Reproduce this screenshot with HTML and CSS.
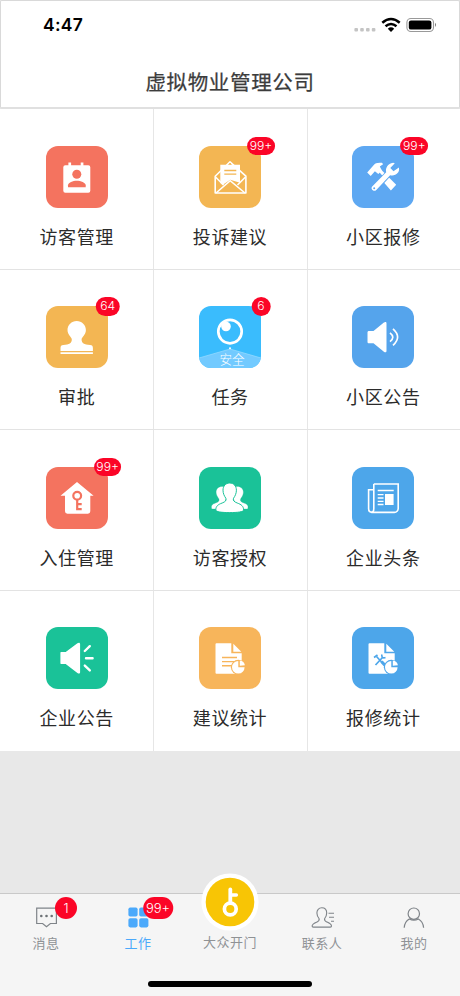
FILE: index.html
```html
<!DOCTYPE html>
<html lang="zh-CN">
<head>
<meta charset="utf-8">
<title>虚拟物业管理公司</title>
<link rel="stylesheet" href="styles.css">
</head>
<body>
<div class="screen">
  <header class="header">
    <div class="status">
      <span class="time">4:47</span>
      <svg class="status-icons" width="84" height="20" viewBox="0 0 84 20">
        <g fill="#c4c4c4"><rect x="1.4" y="13" width="3.6" height="3.4" rx="1"/><rect x="7.2" y="13" width="3.6" height="3.4" rx="1"/><rect x="13" y="13" width="3.6" height="3.4" rx="1"/><rect x="18.8" y="13" width="3.6" height="3.4" rx="1"/></g>
        <g fill="none" stroke="#000" stroke-width="2.5"><path d="M29.3 7.8Q38 .3 46.7 7.8"/><path d="M32.5 11.3Q38 6.6 43.5 11.3"/></g>
        <path d="M34.8 13.7Q38 11 41.2 13.7L38 17Z"/>
        <rect x="53.9" y="3.5" width="26.6" height="13" rx="4" fill="none" stroke="#999" stroke-width="1.1"/>
        <rect x="55.8" y="5.4" width="22.6" height="9.2" rx="2.2"/>
        <path d="M82 7.8Q84 9.8 82 12Z" fill="#777"/>
      </svg>
    </div>
    <h1 class="title">虚拟物业管理公司</h1>
  </header>

  <main class="grid">
    <a class="cell">
      <div class="tile coral">
        <svg viewBox="0 0 62 62"><path fill="#fff" d="M22.4 16.5h2.7v2.8h9.6v-2.8h2.7v2.8h4.9a2 2 0 0 1 2 2v23.4a2 2 0 0 1-2 2H19.3a2 2 0 0 1-2-2V21.3a2 2 0 0 1 2-2h3.1z"/><g fill="#f4735f"><circle cx="30.8" cy="28.2" r="4.5"/><path d="M22 41.2v-2c0-2.4 5-4.5 8.8-4.5s8.9 2.1 8.9 4.5v2z"/></g></svg>
      </div>
      <span class="label">访客管理</span>
    </a>
    <a class="cell">
      <div class="tile amber">
        <svg viewBox="0 0 62 62"><path d="M16.2 30.2 31 15.8 46.9 30.2V47H16.2z" fill="none" stroke="#fff" stroke-width="1.6" stroke-linejoin="round"/><path d="M21.3 18.7H41v18L31.2 33.8 23.5 39l-2.2-2z" fill="#fff"/><path d="m16.5 31 8 8M46.5 31l-8 8M17 47l14.2-12.3L46 47" fill="none" stroke="#fff" stroke-width="1.6"/><path d="M25.3 24.5h12M25.3 28.2h12" stroke="#f3b653" stroke-width="1.3"/><circle cx="31.2" cy="17.8" r=".8" fill="#f3b653"/></svg>
        <span class="badge">99+</span>
      </div>
      <span class="label">投诉建议</span>
    </a>
    <a class="cell">
      <div class="tile blue">
        <svg viewBox="0 0 62 62"><g fill="#fff"><path d="m15.2 26.5 6.6-7.6c1.4-1.7 3.5-2.5 8.2-2.1l1.1 1.4-3.3 2.2 2.1 4-3.6 3.7-3.4-2.9-4.2 4.8z"/><path d="m26.3 25 2.2-2.1 15.7 15.8-5.3 5.9-7-8.1 2.3-2.6z"/></g><path d="m24 41 12-13" stroke="#5ea8f2" stroke-width="6.8"/><path fill="#fff" d="m20.2 40.5 14-14.2c-1-4.2 1.4-8.6 6.9-9.5l1.7.5-4.5 4.8 3.2 3.2 5.4-3.7c1.4 5.1-3.7 9-8.8 7.6L24.3 43.9c-2.5 2.5-6.2-.9-4.1-3.4z"/><circle cx="22.2" cy="42.3" r="1" fill="#5ea8f2"/></svg>
        <span class="badge">99+</span>
      </div>
      <span class="label">小区报修</span>
    </a>
    <a class="cell">
      <div class="tile amber">
        <svg viewBox="0 0 62 62"><path fill="#fff" d="M30.7 15c5.2 0 9.2 4 9.2 9 0 5.2-4.3 6.8-4.3 9.6 0 3.6 2.3 5.2 8.5 5.3 2 0 2.8 1 2.8 3v3.1H14.5v-3.1c0-2 .8-3 2.8-3 6.2-.1 8.5-1.7 8.5-5.3 0-2.8-4.3-4.4-4.3-9.6 0-5 4-9 9.2-9zM14.5 46.2h32.4V48H14.5z"/></svg>
        <span class="badge two">64</span>
      </div>
      <span class="label">审批</span>
    </a>
    <a class="cell">
      <div class="tile sky">
        <svg viewBox="0 0 62 62"><path d="M0 52 31 43l31 9v10H0z" fill="#72caff"/><path d="m0 52 31-9 31 9" fill="none" stroke="#9bdcff" stroke-width=".7"/><circle cx="31" cy="25.6" r="11.7" fill="none" stroke="#fff" stroke-width="2.7"/><circle cx="27" cy="20.5" r="4.8" fill="#fff"/><circle cx="31" cy="42.3" r="1" fill="#fff"/><text class="tile-text" x="33" y="58.3" text-anchor="middle">安全</text></svg>
        <span class="badge">6</span>
      </div>
      <span class="label">任务</span>
    </a>
    <a class="cell">
      <div class="tile blue2">
        <svg viewBox="0 0 62 62"><path fill="#fff" d="M17 25h4.5l10.4-8.4c1.5-1.1 2.6-.6 2.6.8v27.5c0 1.4-1.1 1.9-2.6.8l-10.4-8.4H17c-1 0-1.5-.5-1.5-1.5v-9.3c0-1 .5-1.5 1.5-1.5z"/><path d="M38 26.8Q43.6 31.2 38 35.6M41 22.8Q50.2 31.1 41 39.4" fill="none" stroke="#fff" stroke-width="1.7"/></svg>
      </div>
      <span class="label">小区公告</span>
    </a>
    <a class="cell">
      <div class="tile coral">
        <svg viewBox="0 0 62 62"><path fill="#fff" d="m31 15 16.6 13.8h-3.3v15.5a2.4 2.4 0 0 1-2.4 2.4H21.4a2.4 2.4 0 0 1-2.4-2.4V28.8h-4.5z"/><g fill="none" stroke="#f4735f" stroke-width="2.2"><circle cx="31.2" cy="28.7" r="3.9"/><path d="M31.2 32.6V43.2M31.2 37.2h4.5M31.2 42.2h4.5"/></g></svg>
        <span class="badge">99+</span>
      </div>
      <span class="label">入住管理</span>
    </a>
    <a class="cell">
      <div class="tile green">
        <svg viewBox="0 0 62 62"><g fill="#fff" stroke="#1ac298"><path stroke-width=".3" d="M23.2 19.4c3.4 0 5.8 2.5 5.8 6.2 0 3.2-1.7 5.2-2.4 7.5V42H12.8c-1.2-3.8.8-4.9 3.7-6 3.2-1.2 4.1-2.5 3.4-4.1-1.5-2.2-2.8-4.4-2.8-6.7 0-3.5 2.5-5.8 6.1-5.8z"/><path stroke-width=".3" transform="matrix(-1 0 0 1 61.5 0)" d="M23.2 19.4c3.4 0 5.8 2.5 5.8 6.2 0 3.2-1.7 5.2-2.4 7.5V42H12.8c-1.2-3.8.8-4.9 3.7-6 3.2-1.2 4.1-2.5 3.4-4.1-1.5-2.2-2.8-4.4-2.8-6.7 0-3.5 2.5-5.8 6.1-5.8z"/><path stroke-width="1" d="M30.7 16c4 0 6.7 3 6.7 7.2 0 3.3-1.4 6-2.9 8.1-.7 2.2.6 3.5 3.7 4.7 4.4 1.6 6.4 3.3 6.4 7.1 0 1.7-5.9 2.5-13.9 2.5s-13.9-.8-13.9-2.5c0-3.8 2-5.5 6.4-7.1 3.1-1.2 4.4-2.5 3.7-4.7-1.5-2.1-2.9-4.8-2.9-8.1 0-4.2 2.7-7.2 6.7-7.2z"/></g></svg>
      </div>
      <span class="label">访客授权</span>
    </a>
    <a class="cell">
      <div class="tile azure">
        <svg viewBox="0 0 62 62"><g fill="none" stroke="#fff" stroke-width="1.6"><path d="M21.8 17h24.4v24.6a3.8 3.8 0 0 1-3.8 3.8H20c-2 0-3.4-1.7-3.4-3.8V22.8h5.2"/><path d="M21.8 17v24.6c0 2.2-1 3.8-2.4 3.8"/><path d="M25.7 23.5h16"/><path stroke-width="1.3" d="M25.7 27.7h5.8M25.7 31h5.8M25.7 34.3h5.8M25.7 37.5h5.8"/></g><path fill="#fff" d="M33 27h8.6v11H33z"/></svg>
      </div>
      <span class="label">企业头条</span>
    </a>
    <a class="cell">
      <div class="tile green">
        <svg viewBox="0 0 62 62"><path fill="#fff" d="M15.4 25h4.3L31.4 16.2c1.6-1.1 2.7-.5 2.7.8v28.2c0 1.3-1.1 1.9-2.7.8L19.7 36.9h-4.3c-.7 0-1-.4-1-1V26c0-.7.3-1 1-1z"/><path d="m38.8 24 5-4.8M40 31.3h6.6M38.8 38.6l5 4.8" stroke="#fff" stroke-width="2.4" stroke-linecap="round"/></svg>
      </div>
      <span class="label">企业公告</span>
    </a>
    <a class="cell">
      <div class="tile orange">
        <svg viewBox="0 0 62 62"><path fill="#fff" d="M17.5 16.3h14.8v10h10.4v20.4H17.5a1 1 0 0 1-1-1V17.3a1 1 0 0 1 1-1zM34.3 16.8l8 8h-8z"/><path d="M23 30.5h15M23 34.6h12M23 38.7h10" stroke="#f7b55b" stroke-width="1.4"/><circle cx="39.3" cy="40.2" r="7.4" fill="#f7b55b"/><path fill="#fff" d="M39.3 40.2v-6.3a6.3 6.3 0 1 0 6.3 6.3zM40.8 33.4c3 .3 4.7 2 5.1 4.9l-5.1.4z"/></svg>
      </div>
      <span class="label">建议统计</span>
    </a>
    <a class="cell">
      <div class="tile azure">
        <svg viewBox="0 0 62 62"><path fill="#fff" d="M17.5 16.3h14.8v10h10.4v20.4H17.5a1 1 0 0 1-1-1V17.3a1 1 0 0 1 1-1zM34.3 16.8l8 8h-8z"/><g fill="none" stroke="#4da6ea" stroke-width="1.7"><path d="m23.5 38 7-7.5M24.5 29.5l6 6.5"/><path d="m22 30.5 3.5-2.5M30 27.5c-1 2.5 1 4 3.5 3"/><path stroke-width="3" d="m29.5 34.5 4.5 5"/></g><circle cx="39.3" cy="40.2" r="7.4" fill="#4da6ea"/><path fill="#fff" d="M39.3 40.2v-6.3a6.3 6.3 0 1 0 6.3 6.3zM40.8 33.4c3 .3 4.7 2 5.1 4.9l-5.1.4z"/></svg>
      </div>
      <span class="label">报修统计</span>
    </a>
  </main>

  <nav class="tabs">
    <a class="tab">
      <div class="tab-icon"><svg viewBox="0 0 30 24"><path d="M5.7 2.2h19.7v15.3h-6L15.5 20.8l-3.9-3.3H5.7z" fill="none" stroke="#7f8489" stroke-width="1.2"/><g fill="#6d7276"><circle cx="10.3" cy="10" r="1.3"/><circle cx="15.5" cy="10" r="1.3"/><circle cx="20.7" cy="10" r="1.3"/></g></svg><span class="badge tab-badge">1</span></div>
      <span class="tab-label">消息</span>
    </a>
    <a class="tab active">
      <div class="tab-icon"><svg viewBox="0 0 30 24"><g fill="#4ba9fb"><rect x="5.4" y="1.4" width="9.2" height="9.2" rx="1.8"/><rect x="16.2" y="1.4" width="9.2" height="9.2" rx="1.8"/><rect x="5.4" y="12.2" width="9.2" height="9.2" rx="1.8"/><rect x="16.2" y="12.2" width="9.2" height="9.2" rx="1.8"/></g></svg><span class="badge tab-badge wide">99+</span></div>
      <span class="tab-label">工作</span>
    </a>
    <a class="tab tab-door">
      <div class="door"><svg viewBox="0 0 58 58"><circle cx="29" cy="29" r="28.6" fill="#fff"/><circle cx="29" cy="29" r="24.3" fill="#f8c505"/><g fill="none" stroke="#fff"><circle cx="29.3" cy="36" r="5.9" stroke-width="3.7"/><path d="M29.3 30V16.5" stroke-width="3.8" stroke-linecap="round"/><path d="M31 22h4.4" stroke-width="3.4" stroke-linecap="round"/></g></svg></div>
      <span class="tab-label">大众开门</span>
    </a>
    <a class="tab">
      <div class="tab-icon"><svg viewBox="0 0 30 24"><g fill="none" stroke="#7f8489" stroke-width="1.1"><path d="M14.8 1.8c3.1 0 4.9 2.3 4.9 5.3 0 2.5-1 4.1-2 5.4-.7 1.7 0 2.5 2 3.4 3.2 1.4 4.8 2 4.8 4.2 0 .7-.5 1-1.2 1h-17c-.8 0-1.2-.3-1.2-1 0-2.2 1.8-2.9 5-4.2 2-.9 2.6-1.7 1.9-3.4-1-1.3-2.1-2.9-2.1-5.4 0-3 1.8-5.3 4.9-5.3z"/><path d="M21.5 7.2H27M22 11.2h5M24 15.2h3"/></g></svg></div>
      <span class="tab-label">联系人</span>
    </a>
    <a class="tab">
      <div class="tab-icon"><svg viewBox="0 0 30 24"><g fill="none" stroke="#7f8489" stroke-width="1.2"><circle cx="14.8" cy="7.7" r="5.7"/><path d="M5.2 21.8c.3-4.4 2.2-7.2 5.1-8.8 2.7 1.5 6.4 1.5 9.1 0 2.9 1.6 4.9 4.4 5.2 8.8"/></g></svg></div>
      <span class="tab-label">我的</span>
    </a>
    <div class="home"></div>
  </nav>
</div>
</body>
</html>
```
FILE: styles.css
```css
* { box-sizing: border-box; }
body { margin: 0; background: #e8e8e8; font-family: "Noto Sans CJK SC", sans-serif; }
.screen { width: 460px; height: 996px; display: flex; flex-direction: column; overflow: hidden; }

.header { height: 109px; flex: none; background: #fff; border: 1px solid #d9d9d9; border-bottom-width: 2px; border-bottom-color: #e0e0e0; border-radius: 2px; }
.status { height: 47px; padding: 0 22px 0 42px; display: flex; justify-content: space-between; align-items: center; }
.time { font: 600 17.5px/20px Inter, sans-serif; color: #000; letter-spacing: .3px; }
.status-icons { display: block; }
.title { margin: 16px 0 0; font-size: 20.5px; line-height: 34px; font-weight: 400; -webkit-text-stroke: .25px #3c3c3c; letter-spacing: .65px; text-align: center; color: #3c3c3c; }

.grid { flex: none; display: grid; grid-template-columns: repeat(3, 1fr); grid-auto-rows: 160.5px; background: #fff; }
.cell { display: flex; flex-direction: column; align-items: center; padding-top: 36.8px; border-bottom: 1px solid #e3e3e3; box-shadow: inset 1px 0 #e6e6e6; }
.cell:nth-child(3n+1) { box-shadow: none; }
.cell:nth-child(n+10) { border-bottom: 0; }
.tile { position: relative; width: 62px; height: 62px; border-radius: 12px; }
.tile svg { display: block; width: 62px; height: 62px; border-radius: 12px; }
.coral { background: #f4735f; }
.amber { background: #f3b653; }
.orange { background: #f7b55b; }
.blue { background: #5ea8f2; }
.blue2 { background: #55a4ec; }
.azure { background: #4da6ea; }
.sky { background: #3abcfd; }
.green { background: #1ac298; }
.tile-text { font-size: 12.6px; font-weight: 300; fill: #fff; }
.label { margin-top: 14px; font-size: 18px; line-height: 28px; letter-spacing: .6px; color: #2b2b2b; }

.badge { position: absolute; left: 62px; top: -9.3px; transform: translateX(-50%); height: 18.6px; min-width: 18.6px; padding: 0 2.6px; border-radius: 11px; background: #fb0527; color: #fff; font: 300 12.2px/18.8px Inter, sans-serif; text-align: center; }
.badge.two { min-width: 24.5px; }

.tabs { position: relative; margin-top: auto; height: 103px; display: grid; grid-template-columns: repeat(5, 92px); background: #f5f5f5; border-top: 1px solid #c9c9c9; }
.tab { display: flex; flex-direction: column; align-items: center; padding-top: 12px; color: #8f9295; }
.tab.active { color: #4ba9fb; }
.tab-icon { position: relative; width: 30px; height: 24px; }
.tab-icon svg { display: block; width: 30px; height: 24px; }
.tab-label { margin-top: 3px; font-size: 13px; line-height: 20px; letter-spacing: .5px; }
.tab-badge { left: 35px; top: -9px; height: 22px; min-width: 22px; line-height: 22px; font-size: 13px; padding: 0 2px; }
.tab-badge.wide { min-width: 29.5px; }
.tab-door { padding-top: 0; }
.door { width: 58px; height: 58px; margin-top: -21px; }
.door svg { display: block; width: 58px; height: 58px; }
.tab-door .tab-label { margin-top: 1px; }
.home { position: absolute; left: 148px; bottom: 9px; width: 164px; height: 6px; border-radius: 3px; background: #000; }
```
